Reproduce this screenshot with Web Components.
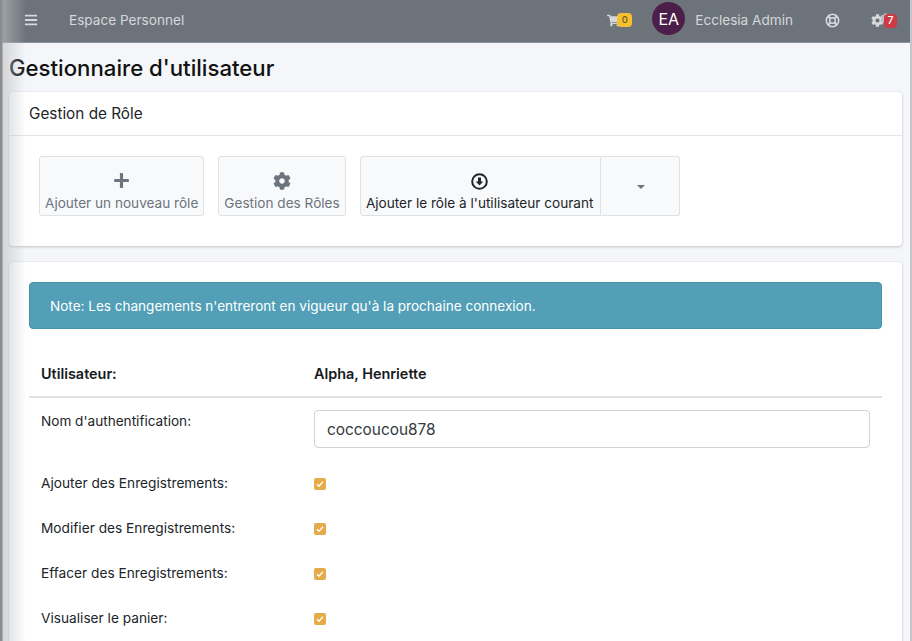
<!DOCTYPE html>
<html lang="fr">
<head>
<meta charset="utf-8">
<title>Gestionnaire d'utilisateur</title>
<style>
    html, body { margin: 0; padding: 0; height: 100%; overflow: hidden; }
    body { background: #f4f6f9; font-family: Inter, "Liberation Sans", sans-serif; }
</style>
</head>
<body>
<app-shell>
    <top-nav></top-nav>
    <h1 slot="title">Gestionnaire d'utilisateur</h1>
    <role-card></role-card>
    <user-card></user-card>
</app-shell>

<script>
const ICONS = {
    bars: ['0 0 448 512', 'M16 132h416c8.837 0 16-7.163 16-16V76c0-8.837-7.163-16-16-16H16C7.163 60 0 67.163 0 76v40c0 8.837 7.163 16 16 16zm0 160h416c8.837 0 16-7.163 16-16v-40c0-8.837-7.163-16-16-16H16c-8.837 0-16 7.163-16 16v40c0 8.837 7.163 16 16 16zm0 160h416c8.837 0 16-7.163 16-16v-40c0-8.837-7.163-16-16-16H16c-8.837 0-16 7.163-16 16v40c0 8.837 7.163 16 16 16z'],
    plus: ['0 0 448 512', 'M416 208H272V64c0-17.67-14.33-32-32-32h-32c-17.67 0-32 14.33-32 32v144H32c-17.67 0-32 14.33-32 32v32c0 17.67 14.33 32 32 32h144v144c0 17.67 14.33 32 32 32h32c17.67 0 32-14.33 32-32V304h144c17.67 0 32-14.33 32-32v-32c0-17.67-14.33-32-32-32z'],
    cog: ['0 0 512 512', 'M487.4 315.7l-42.6-24.6c4.3-23.2 4.3-47 0-70.2l42.6-24.6c4.9-2.8 7.1-8.6 5.5-14-11.1-35.6-30-67.8-54.7-94.6-3.8-4.1-10-5.1-14.8-2.3L380.8 110c-17.9-15.4-38.5-27.3-60.8-35.1V25.8c0-5.6-3.9-10.5-9.4-11.7-36.7-8.2-74.3-7.8-109.2 0-5.5 1.2-9.4 6.1-9.4 11.7V75c-22.2 7.9-42.8 19.8-60.8 35.1L88.7 85.5c-4.9-2.8-11-1.9-14.8 2.3-24.7 26.7-43.6 58.9-54.7 94.6-1.7 5.4.6 11.2 5.5 14L67.3 221c-4.3 23.2-4.3 47 0 70.2l-42.6 24.6c-4.9 2.8-7.1 8.6-5.5 14 11.1 35.6 30 67.8 54.7 94.6 3.8 4.1 10 5.1 14.8 2.3l42.6-24.6c17.9 15.4 38.5 27.3 60.8 35.1v49.2c0 5.6 3.9 10.5 9.4 11.7 36.7 8.2 74.3 7.8 109.2 0 5.5-1.2 9.4-6.1 9.4-11.7v-49.2c22.2-7.9 42.8-19.8 60.8-35.1l42.6 24.6c4.9 2.8 11 1.9 14.8-2.3 24.7-26.7 43.6-58.9 54.7-94.6 1.5-5.5-.7-11.3-5.6-14.1zM256 336c-44.1 0-80-35.9-80-80s35.9-80 80-80 80 35.9 80 80-35.9 80-80 80z'],
    cart: ['0 0 576 512', 'M528.12 301.319l47.273-208C578.806 78.301 567.391 64 551.99 64H159.208l-9.166-44.81C147.758 8.021 137.93 0 126.529 0H24C10.745 0 0 10.745 0 24v16c0 13.255 10.745 24 24 24h69.883l70.248 343.435C147.325 417.1 136 435.222 136 456c0 30.928 25.072 56 56 56s56-25.072 56-56c0-15.674-6.447-29.835-16.824-40h209.647C430.447 426.165 424 440.326 424 456c0 30.928 25.072 56 56 56s56-25.072 56-56c0-22.172-12.888-41.332-31.579-50.405l5.517-24.276c3.413-15.018-8.002-29.319-23.403-29.319H218.117l-6.545-32h293.145c11.206 0 20.92-7.754 23.403-18.681z']
};

function icon(name, size) {
    const [box, d] = ICONS[name];
    return `<svg width="${size}" height="${size}" viewBox="${box}" fill="currentColor"><path d="${d}"/></svg>`;
}

class AppShell extends HTMLElement {
    constructor() {
        super();
        this.attachShadow({ mode: 'open' });
    }

    connectedCallback() {
        this.shadowRoot.innerHTML = `
            <style>
                :host {
                    display: block;
                    position: relative;
                    height: 641px;
                    overflow: hidden;
                    color: #212529;
                }
                .shell {
                    display: grid;
                    grid-template-columns: 1fr 2px;
                    height: 100%;
                }
                .main {
                    min-width: 0;
                }
                .content {
                    padding: 0 8px 0 9px;
                }
                .edge {
                    background: #c4c6ca;
                }
                .side-shadow {
                    position: absolute;
                    left: 0;
                    top: 0;
                    bottom: 0;
                    width: 26px;
                    pointer-events: none;
                    background: linear-gradient(90deg, #8a8c90 0, #8a8c90 2px, rgba(190,192,196,.6) 3px, rgba(190,192,196,0) 26px);
                }
                ::slotted(h1) {
                    margin: 0;
                    height: 49px;
                    line-height: 49px;
                    font-size: 22.2px;
                    font-weight: 500;
                    color: #111;
                }
            </style>
            <div class="shell">
                <div class="main">
                    <slot name="nav"></slot>
                    <div class="content">
                        <slot name="title"></slot>
                        <slot></slot>
                    </div>
                </div>
                <div class="edge"></div>
            </div>
            <div class="side-shadow"></div>
        `;
        const nav = this.querySelector('top-nav');
        if (nav) nav.slot = 'nav';
    }
}

class TopNav extends HTMLElement {
    constructor() {
        super();
        this.attachShadow({ mode: 'open' });
    }

    connectedCallback() {
        this.shadowRoot.innerHTML = `
            <style>
                :host {
                    display: flex;
                    align-items: center;
                    height: 40px;
                    padding-bottom: 2px;
                    background: #6c737b;
                    border-bottom: 1px solid #8d9298;
                    color: #d6d8db;
                    font-size: 13.6px;
                }
                .bars { display: flex; margin-left: 24px; }
                .brand { margin-left: 31px; }
                .spacer { flex: 1; }
                .cart { display: flex; align-items: center; position: relative; width: 25px; }
                .badge {
                    display: inline-block;
                    position: absolute;
                    font-weight: 500;
                    text-align: center;
                }
                .cart .badge {
                    left: 10px;
                    top: -1px;
                    width: 15px;
                    height: 14px;
                    line-height: 14px;
                    font-size: 9.5px;
                    border-radius: 4px;
                    background: #f4c02f;
                    color: #6a5a20;
                }
                .avatar {
                    display: flex;
                    align-items: center;
                    justify-content: center;
                    width: 33px;
                    height: 33px;
                    border-radius: 50%;
                    margin: -3px 0 0 20px;
                    background: #4c1f4a;
                    color: #fff;
                    font-size: 16px;
                }
                .name { margin-left: 10px; }
                .help { display: flex; margin-left: 32px; }
                .cogs {
                    display: flex;
                    position: relative;
                    margin: 0 12px 0 31px;
                    width: 27px;
                }
                .cogs .small { position: absolute; left: 9px; top: -3px; color: #b9bcc0; }
                .cogs .badge {
                    left: 13px;
                    top: 0;
                    width: 13px;
                    height: 14px;
                    line-height: 14px;
                    font-size: 10.5px;
                    border-radius: 4px;
                    background: #cb3a45;
                    color: #fff;
                }
            </style>
            <span class="bars">${icon('bars', 14)}</span>
            <span class="brand">Espace Personnel</span>
            <span class="spacer"></span>
            <span class="cart">${icon('cart', 13)}<span class="badge">0</span></span>
            <span class="avatar">EA</span>
            <span class="name">Ecclesia Admin</span>
            <span class="help">
                <svg width="15" height="15" viewBox="0 0 16 16" fill="none" stroke="currentColor">
                    <circle cx="8" cy="8" r="6.6" stroke-width="1.7"/>
                    <circle cx="8" cy="8" r="3" stroke-width="1.5"/>
                    <path stroke-width="2.2" d="M3.4 3.4l2.4 2.4M12.6 3.4l-2.4 2.4M3.4 12.6l2.4-2.4M12.6 12.6l-2.4-2.4"/>
                </svg>
            </span>
            <span class="cogs">
                <span class="small">${icon('cog', 11)}</span>
                ${icon('cog', 13)}
                <span class="badge">7</span>
            </span>
        `;
    }
}

class ToolButton extends HTMLElement {
    constructor() {
        super();
        this.attachShadow({ mode: 'open' });
    }

    connectedCallback() {
        this.shadowRoot.innerHTML = `
            <style>
                :host {
                    display: flex;
                    flex-direction: column;
                    align-items: center;
                    justify-content: flex-end;
                    box-sizing: border-box;
                    height: 60px;
                    padding: 0 5px 3px;
                    background: #f8f9fa;
                    border: 1px solid #dfe1e3;
                    border-radius: 3px;
                    color: var(--btn-color, #6c757d);
                    font-size: 13.6px;
                    white-space: nowrap;
                }
                .icon { display: flex; height: 18px; margin-bottom: 4px; }
                .label { line-height: 18px; }
            </style>
            <span class="icon"><slot name="icon"></slot></span>
            <span class="label"><slot></slot></span>
        `;
    }
}

class RoleCard extends HTMLElement {
    constructor() {
        super();
        this.attachShadow({ mode: 'open' });
    }

    connectedCallback() {
        this.shadowRoot.innerHTML = `
            <style>
                :host {
                    display: block;
                    height: 154px;
                    background: #fff;
                    border-radius: 4px;
                    box-shadow: 0 0 1px rgba(0,0,0,.13), 0 1px 3px rgba(0,0,0,.2);
                    margin-bottom: 16px;
                }
                .head {
                    height: 43px;
                    line-height: 44px;
                    padding-left: 20px;
                    border-bottom: 1px solid #e5e5e5;
                    font-size: 15.3px;
                    color: #212529;
                }
                .body {
                    display: flex;
                    gap: 14px;
                    padding: 20px 0 0 30px;
                }
                .split { display: flex; }
                .split tool-button:first-child {
                    --btn-color: #212529;
                    width: 241px;
                    padding-right: 6px;
                    border-radius: 3px 0 0 3px;
                }
                .caret {
                    display: flex;
                    align-items: center;
                    justify-content: center;
                    box-sizing: border-box;
                    width: 79px;
                    height: 60px;
                    background: #f8f9fa;
                    border: 1px solid #dfe1e3;
                    border-left: 0;
                    border-radius: 0 3px 3px 0;
                }
                .caret i {
                    margin: 2px 0 0 2px;
                    border-top: 4px solid #6c757d;
                    border-left: 4px solid transparent;
                    border-right: 4px solid transparent;
                }
                svg { display: block; }
                .arrow { margin-top: 1px; }
            </style>
            <div class="head">Gestion de Rôle</div>
            <div class="body">
                <tool-button><span slot="icon">${icon('plus', 17)}</span>Ajouter un nouveau rôle</tool-button>
                <tool-button><span slot="icon">${icon('cog', 18)}</span>Gestion des Rôles</tool-button>
                <div class="split">
                    <tool-button>
                        <span slot="icon">
                            <svg class="arrow" width="17" height="17" viewBox="0 0 17 17">
                                <circle cx="8.5" cy="8.5" r="7.3" fill="none" stroke="#212529" stroke-width="2"/>
                                <path fill="#212529" d="M7 4.4h3v4h2.3l-3.8 4.2-3.8-4.2H7z"/>
                            </svg>
                        </span>Ajouter le rôle à l'utilisateur courant</tool-button>
                    <div class="caret"><i></i></div>
                </div>
            </div>
        `;
    }
}

class CheckRow extends HTMLElement {
    constructor() {
        super();
        this.attachShadow({ mode: 'open' });
    }

    connectedCallback() {
        this.shadowRoot.innerHTML = `
            <style>
                :host {
                    display: grid;
                    grid-template-columns: 273px 1fr;
                    align-items: center;
                    height: 45px;
                    padding-left: 12px;
                    font-size: 13.7px;
                    color: #212529;
                }
                .box {
                    display: flex;
                    align-items: center;
                    justify-content: center;
                    width: 12px;
                    height: 12px;
                    margin-top: 2px;
                    background: #e5ab4a;
                    border-radius: 2px;
                }
            </style>
            <span><slot></slot></span>
            <span class="box">
                <svg width="8" height="8" viewBox="0 0 8 8" fill="none" stroke="#fff" stroke-width="1.4">
                    <path d="M1 4.2l2 2 4-4.6"/>
                </svg>
            </span>
        `;
    }
}

class UserCard extends HTMLElement {
    constructor() {
        super();
        this.attachShadow({ mode: 'open' });
    }

    connectedCallback() {
        this.shadowRoot.innerHTML = `
            <style>
                :host {
                    display: block;
                    padding: 20px 20px 0;
                    height: 400px;
                    background: #fff;
                    border-radius: 4px;
                    box-shadow: 0 0 1px rgba(0,0,0,.13), 0 1px 3px rgba(0,0,0,.2);
                    font-size: 13.6px;
                }
                .alert {
                    box-sizing: border-box;
                    height: 47px;
                    line-height: 47px;
                    padding-left: 20px;
                    background: #529fb7;
                    border: 1px solid #4a94ab;
                    border-radius: 4px;
                    color: #fff;
                    font-size: 13.55px;
                }
                .user {
                    display: grid;
                    grid-template-columns: 273px 1fr;
                    align-items: center;
                    height: 67px;
                    margin-top: 2px;
                    padding: 19px 12px 0;
                    box-sizing: border-box;
                    border-bottom: 2px solid #dee2e6;
                    font-size: 14.4px;
                    font-weight: 600;
                    color: #16191c;
                }
                .login {
                    display: grid;
                    grid-template-columns: 273px 1fr;
                    padding: 12px 12px 0;
                    height: 50px;
                    color: #212529;
                }
                .login label { line-height: 22px; }
                .input {
                    box-sizing: border-box;
                    height: 38px;
                    line-height: 37px;
                    padding-left: 12px;
                    background: #fff;
                    border: 1px solid #ced4da;
                    border-radius: 4px;
                    font-size: 15.4px;
                    color: #343a40;
                }
            </style>
            <div class="alert">Note: Les changements n'entreront en vigueur qu'à la prochaine connexion.</div>
            <div class="user"><span>Utilisateur:</span><span>Alpha, Henriette</span></div>
            <div class="login">
                <label>Nom d'authentification:</label>
                <div class="input">coccoucou878</div>
            </div>
            <div class="rows">
                <check-row>Ajouter des Enregistrements:</check-row>
                <check-row>Modifier des Enregistrements:</check-row>
                <check-row>Effacer des Enregistrements:</check-row>
                <check-row>Visualiser le panier:</check-row>
            </div>
        `;
    }
}

customElements.define('app-shell', AppShell);
customElements.define('top-nav', TopNav);
customElements.define('tool-button', ToolButton);
customElements.define('role-card', RoleCard);
customElements.define('check-row', CheckRow);
customElements.define('user-card', UserCard);
</script>
</body>
</html>
